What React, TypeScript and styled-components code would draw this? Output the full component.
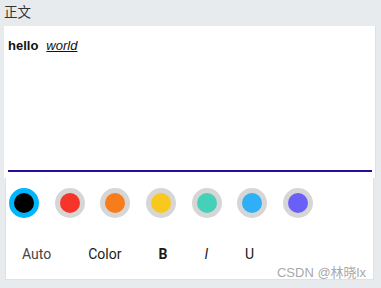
import styled, { createGlobalStyle } from "styled-components";

const GlobalStyle = createGlobalStyle`
  html, body {
    margin: 0;
    padding: 0;
    background: #e8ebee;
    font-family: "Liberation Sans", Arial, "Noto Sans CJK SC", sans-serif;
  }
`;

const Page = styled.div`
  position: relative;
  width: 381px;
  height: 288px;
  overflow: hidden;
`;
const Label = styled.div`
  height: 26px;
  padding-left: 4px;
  font-size: 13.5px;
  line-height: 22px;
  color: #333;
  font-family: "Noto Sans CJK SC", sans-serif;
`;
const Editor = styled.div`
  margin: 0 6px 0 4px;
  height: 152px;
  background: #fff;
  box-shadow: 1px 0 0 #dcdfe3;
  display: flex;
  flex-direction: column;
`;
const Content = styled.div`
  flex: 1;
  margin: 0 3px 6px 4px;
  padding-top: 12px;
  border-bottom: 2px solid #2a0c9c;
  font-size: 13px;
  line-height: 16px;
  color: #111;
`;
const Bold = styled.b`
  margin-right: 8px;
`;
const Em = styled.i`
  text-decoration: underline;
`;
const Toolbar = styled.div`
  margin: 0 7px 0 5px;
  height: 102px;
  background: #fff;
  border: 1px solid #dfe1e4;
  border-top: none;
  padding: 10px 0 0 3px;
  box-sizing: border-box;
`;
const Swatches = styled.div`
  display: flex;
  gap: 15.7px;
`;
const Swatch = styled.div<{ $color: string; $active?: boolean }>`
  width: 30px;
  height: 30px;
  border-radius: 50%;
  box-sizing: border-box;
  border: 5.5px solid ${(p) => (p.$active ? "#00b7ff" : "#d6d6d6")};
  background: ${(p) => p.$color};
`;
const Buttons = styled.div`
  display: flex;
  align-items: baseline;
  gap: 37px;
  padding-left: 13px;
  margin-top: 27px;
  font-family: Roboto, "Liberation Sans", sans-serif;
  font-size: 14px;
  line-height: 18px;
`;
const Btn = styled.span<{ $dark?: boolean }>`
  color: ${(p) => (p.$dark ? "#1a1a1a" : "#444")};
`;
const Watermark = styled.div`
  position: absolute;
  right: 15px;
  bottom: 7px;
  font-size: 13px;
  color: #a9a9a9;
  font-family: "Liberation Sans", "Noto Sans CJK SC", sans-serif;
`;

const colors = ["#000000", "#f5352a", "#f77c1c", "#f9c81f", "#45d1b8", "#2eaff6", "#6a5ff8"];

export default function App() {
  return (
    <Page>
      <GlobalStyle />
      <Label>正文</Label>
      <Editor>
        <Content>
          <Bold>hello</Bold>
          <Em>world</Em>
        </Content>
      </Editor>
      <Toolbar>
        <Swatches>
          {colors.map((c, i) => (
            <Swatch key={c} $color={c} $active={i === 0} />
          ))}
        </Swatches>
        <Buttons>
          <Btn>Auto</Btn>
          <Btn $dark>Color</Btn>
          <Btn $dark><b>B</b></Btn>
          <Btn $dark><i>I</i></Btn>
          <Btn $dark>U</Btn>
        </Buttons>
      </Toolbar>
      <Watermark>CSDN @林晓lx</Watermark>
    </Page>
  );
}
